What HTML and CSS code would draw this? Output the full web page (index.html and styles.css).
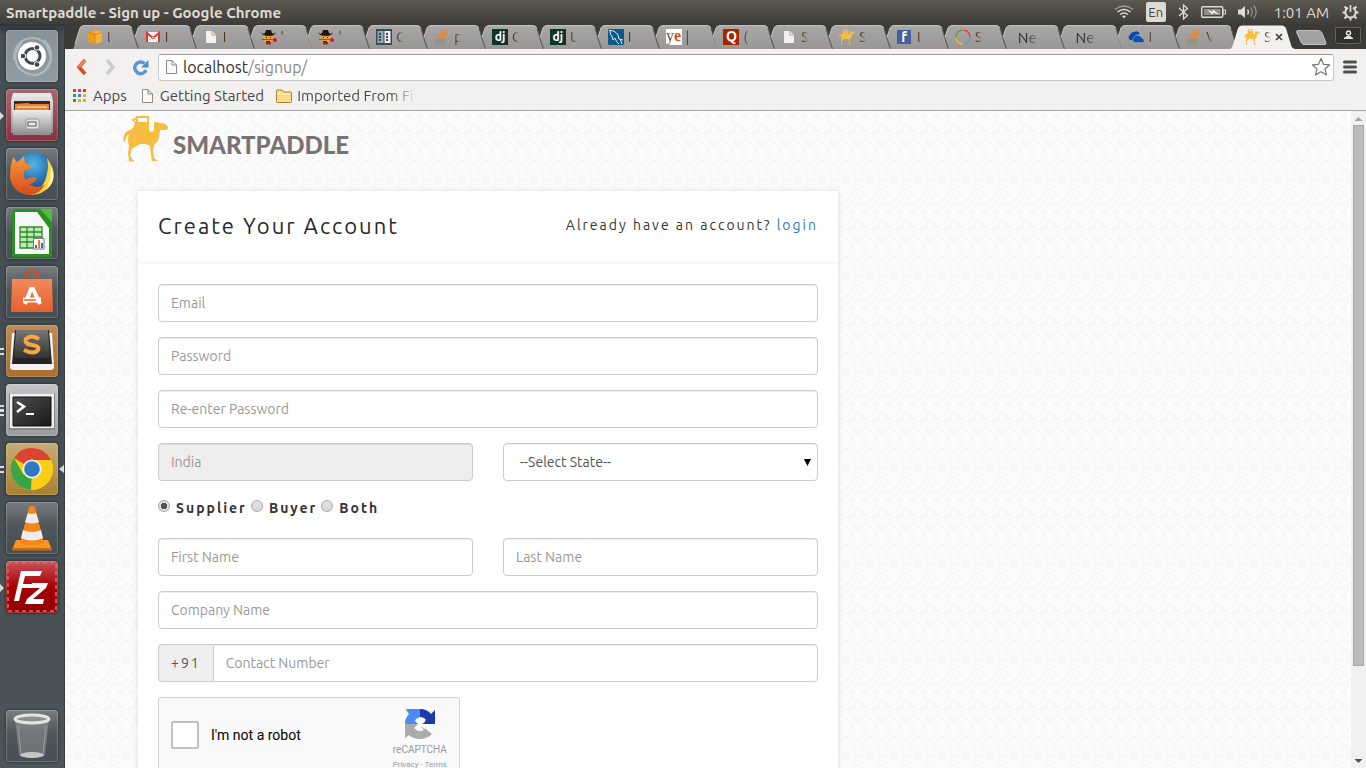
FILE: index.html
```html
<!DOCTYPE html>
<html lang="en">
<head>
<meta charset="utf-8">
<title>Smartpaddle - Sign up</title>
<link rel="stylesheet" href="styles.css">
</head>
<body>
<svg class="defs" aria-hidden="true">
  <defs>
    <linearGradient id="g-tab" x1="0" y1="0" x2="0" y2="1"><stop offset="0" stop-color="#a9a8a6"/><stop offset="1" stop-color="#989795"/></linearGradient>
    <linearGradient id="g-metal" x1="0" y1="0" x2="0" y2="1"><stop offset="0" stop-color="#ededed"/><stop offset="1" stop-color="#8d8d8d"/></linearGradient>
    <linearGradient id="g-bag" x1="0" y1="0" x2="0" y2="1"><stop offset="0" stop-color="#f08a5d"/><stop offset="1" stop-color="#e8602c"/></linearGradient>
    <linearGradient id="g-key" x1="0" y1="0" x2="0" y2="1"><stop offset="0" stop-color="#777"/><stop offset="1" stop-color="#333"/></linearGradient>
    <linearGradient id="g-term" x1="0" y1="0" x2="1" y2="1"><stop offset="0" stop-color="#505050"/><stop offset="1" stop-color="#181818"/></linearGradient>
    <radialGradient id="g-globe" cx=".5" cy=".3" r=".7"><stop offset="0" stop-color="#4fb8ea"/><stop offset="1" stop-color="#123a80"/></radialGradient>
    <linearGradient id="g-fox" x1="0" y1="0" x2="0" y2="1"><stop offset="0" stop-color="#f39a3a"/><stop offset="1" stop-color="#d84a1c"/></linearGradient>
  </defs>
  <symbol id="tab" viewBox="0 0 66 24" preserveAspectRatio="none">
    <path d="M4 12 L7 3 Q8 .5 11 .5 H55 Q58 .5 59 3 L64 20 Q65 23 66 24 H8 Z" fill="url(#g-tab)"/>
    <path d="M4 12 L7 3 Q8 .5 11 .5 H55 Q58 .5 59 3" fill="none" stroke="#c4c3c1"/>
    <path d="M59 3 L64 20 Q65 23 66 24" fill="none" stroke="#656461"/>
  </symbol>
  <symbol id="tab-first" viewBox="0 0 66 24" preserveAspectRatio="none">
    <path d="M0 24 Q1 22 2 19 L7 3 Q8 .5 11 .5 H55 Q58 .5 59 3 L64 20 Q65 23 66 24 Z" fill="url(#g-tab)"/>
    <path d="M2 19 L7 3 Q8 .5 11 .5 H55 Q58 .5 59 3" fill="none" stroke="#c4c3c1"/>
    <path d="M59 3 L64 20 Q65 23 66 24" fill="none" stroke="#656461"/>
  </symbol>
  <symbol id="tab-active" viewBox="0 0 68 24" preserveAspectRatio="none">
    <path d="M0 24 Q2 23 3 20 L8 4 Q9 .5 13 .5 H53 Q57 .5 58 4 L63 20 Q64 24 68 24 Z" fill="#f2f1f0"/>
  </symbol>
  <symbol id="camel" viewBox="0 0 45 46">
    <path d="M0 25 Q1 17 4 15 Q8 14 10 12 L12 6 H26 V14 Q29 18 31 14 V6 Q34 6 37 7 Q43 7 45 11 Q45 14 42 14 H37 L36 22 Q34 27 31 29 L30 35 L31 42 L35 45 H29 L28 39 L27 30 Q21 26 15 29 L9 33 L7 39 L9 43 L12 45.500 H6 L5 37 L6 30 Q4 24 6 18 Q3 19 2 26 Z" fill="#f6bd42"/>
    <path d="M14 7 V1 H25 V7 M14 2 L10 4 L13 6" fill="none" stroke="#f6bd42" stroke-width="2"/>
  </symbol>
  <symbol id="page" viewBox="0 0 16 16"><path d="M3 2 H9 L13 6 V14 H3 Z" fill="#f1f1f1"/><path d="M9 2 V6 H13" fill="none" stroke="#a4a4a4"/></symbol>
  <symbol id="page-line" viewBox="0 0 16 16"><path d="M3.500 1.500 H9 L13.500 6 V14.500 H3.500 Z M9 1.500 V6 H13.500" fill="#f8f8f8" stroke="#8a8a8a"/></symbol>
  <symbol id="aws" viewBox="0 0 16 16"><path d="M1 3 L8 1 V15 L1 13 Z" fill="#eb9e22"/><path d="M15 3 L8 1 V15 L15 13 Z" fill="#f8b436"/><path d="M1 3.500 L8 5.500 L15 3.500 M8 5 V15" stroke="#c27c17" stroke-width=".7" fill="none"/></symbol>
  <symbol id="gmail" viewBox="0 0 16 16"><path d="M1 3 H15 V13 H1 Z" fill="#f4f4f4"/><path d="M2 13 V4 L8 9 L14 4 V13" fill="none" stroke="#d73a30" stroke-width="2"/><path d="M4 12 L8 8 L12 12" fill="none" stroke="#c9c9c9"/></symbol>
  <symbol id="hat" viewBox="0 0 16 16"><circle cx="7.500" cy="9" r="4.800" fill="#e8a33c"/><path d="M0 3 Q2 6 4 4 L5 1 H10 L11 4 Q13 6 15 3 Q14 7 8 7 Q1 7 0 3Z" fill="#1b1712"/><path d="M5 13 H10 V15.500 H5Z" fill="#8d2e19"/><path d="M5 8.500 H6 M9 8.500 H10 M5 12.500 H9" stroke="#222"/><path d="M1 10.500 H13" stroke="#2f8b2d"/><circle cx="14" cy="11" r="2" fill="#e3122d"/></symbol>
  <symbol id="book" viewBox="0 0 16 16"><path d="M0 0 H16 V16 H0Z" fill="#3c4a52"/><path d="M1.500 2 H7.500 V14 H1.500Z" fill="#8fa9bb"/><path d="M8.500 2 H14.500 V14 H8.500Z" fill="#eef1f2"/><path d="M4 4 V12 M11 4 V12" stroke="#33424c" stroke-width="2" stroke-dasharray="2 1"/></symbol>
  <symbol id="so" viewBox="0 0 16 16"><path d="M1.500 10 V15 H10.500 V10 M3 11 H9 M3 13 H9" fill="none" stroke="#8b8680"/><path d="M3 8.500 L9 9.500 M4 6 L9.500 8.500 M6 3.500 L10.500 7.500 M8.500 1.500 L11.500 6.500 M12 0 L12.500 5.500" stroke="#f0862c" stroke-width="1.500"/></symbol>
  <symbol id="mysql" viewBox="0 0 16 16"><rect width="16" height="16" rx="1" fill="#0a5a88"/><path d="M1 1.500 Q7 1 10 6 L11 10 L15 11 M2 2 Q2 6 4 7 L5 11 L7 9 Q8 13 11 15 M12 10 L14 15" fill="none" stroke="#e3eef5"/></symbol>
  <symbol id="ring" viewBox="0 0 16 16"><g fill="none" stroke-width="1.500"><path d="M9 1 A7 7 0 0 1 15 8" stroke="#e33"/><path d="M15 9 A7 7 0 0 1 9 15" stroke="#5b9bd5"/><path d="M8 15 A7 7 0 0 1 1 9" stroke="#efb620"/><path d="M1 8 A7 7 0 0 1 8 1" stroke="#659a55"/></g></symbol>
  <symbol id="cloud" viewBox="0 0 16 16"><path d="M2 11 Q-1 8 2 6 Q3 3 6 3 Q10 1 12 5 L8 6 L5 11Z" fill="#0a48a6"/><path d="M6 13.500 Q3 11 6 8 Q8 5 12 7 Q13 8 14 9 Q17 10 16 13.500Z" fill="#0b51be" stroke="#a2a19f" stroke-width=".6"/></symbol>
</svg>

<header class="menubar">
  <div class="menubar-title">Smartpaddle - Sign up - Google Chrome</div>
  <div class="tray">
    <svg width="20" height="16" viewBox="0 0 20 16" fill="none" stroke="#dfdbd2" stroke-width="1.500"><path d="M1 5.500 Q10 -1.500 19 5.500" opacity=".55"/><path d="M3.500 8 Q10 3 16.500 8"/><path d="M6 10.500 Q10 7.500 14 10.500"/><path d="M8 12 L10 14.500 L12 12 Q10 11 8 12Z" fill="#dfdbd2" stroke="none"/></svg>
    <span class="lang">En</span>
    <svg width="11" height="16" viewBox="0 0 11 16" fill="none" stroke="#dfdbd2" stroke-width="1.300"><path d="M1 4 L9.500 11.500 L5.500 15 V1 L9.500 4.500 L1 12"/></svg>
    <svg width="25" height="14" viewBox="0 0 25 14"><rect x=".7" y="1.700" width="21" height="10.600" rx="1" fill="none" stroke="#dfdbd2" stroke-width="1.400"/><path d="M3 4 H19.500 V10 H3Z" fill="#918e87"/><path d="M22 5 H24.500 V9 H22Z" fill="none" stroke="#dfdbd2"/><path d="M6 4.500 L11.500 7 L12 4.500 L18 9.500 L12 7.500 L11.500 9.500Z" fill="#fff"/></svg>
    <svg width="21" height="16" viewBox="0 0 21 16" fill="none" stroke="#dfdbd2" stroke-width="1.300"><path d="M0 5.500 H3 L7 2 V14 L3 10.500 H0Z" fill="#dfdbd2" stroke="none"/><path d="M9.500 5.500 Q11.500 8 9.500 10.500"/><path d="M12.500 3.500 Q16 8 12.500 12.500" opacity=".5"/><path d="M15.500 1.500 Q21 8 15.500 14.500" opacity=".5"/></svg>
    <span class="clock">1:01 AM</span>
    <svg width="17" height="17" viewBox="0 0 17 17" fill="none" stroke="#dfdbd2"><path d="M6 3.700 A5.200 5.200 0 1 0 11 3.700" stroke-width="2"/><path d="M8.500 1 V8" stroke-width="1.700"/><path d="M.5 8.500 H3 M14 8.500 H16.500 M8.500 14 V16.500 M2.500 2.500 L4.500 4.500 M14.500 2.500 L12.500 4.500 M2.500 14.500 L4.500 12.500 M14.500 14.500 L12.500 12.500" stroke-width="2"/></svg>
  </div>
</header>

<div class="desktop">
<nav class="dock" aria-label="Launcher">
  <button class="app app-dash" aria-label="Dash"><svg viewBox="0 0 52 52"><path d="M8 30 Q8 8 28 8 Q42 10 44 26 M14 40 Q4 26 16 12 M44 22 Q48 40 30 45 Q18 45 12 36 M38 10 Q52 24 38 42" fill="none" stroke="#c7d0d5" stroke-width="2" opacity=".6"/><circle cx="26" cy="26" r="14" fill="#fff"/><circle cx="26.500" cy="26" r="7.500" fill="none" stroke="#3f474b" stroke-width="3"/><g fill="#3f474b" stroke="#fff"><circle cx="17" cy="26" r="2.800"/><circle cx="31" cy="17.500" r="2.800"/><circle cx="31" cy="34.500" r="2.800"/></g></svg></button>
  <button class="app app-files" aria-label="Files"><i class="run run-one"></i><svg viewBox="0 0 52 52"><path d="M7 4 H45 L47 12 V44 H5 V12Z" fill="url(#g-metal)"/><path d="M8 12 H44 V22 H8Z" fill="#3a2a24"/><path d="M9 15 L22 14 L24 15 H43 V22 H9Z" fill="#e98137"/><path d="M11 18 H41" stroke="#fff0d0"/><path d="M7 21 H45 V46 H7Z" fill="url(#g-metal)"/><rect x="20" y="30" width="13" height="10" rx="2" fill="#e3e3e3" stroke="#999"/><rect x="22" y="33" width="8" height="4" fill="#eee" stroke="#555"/></svg></button>
  <button class="app" aria-label="Firefox"><svg viewBox="0 0 52 52"><circle cx="27" cy="25" r="21" fill="url(#g-globe)"/><path d="M41 10 Q53 26 43 39 Q34 49 20 46 Q39 42 41 25 Q43 20 41 10Z" fill="#fbd33a"/><path d="M45 18 Q52 32 40 42 Q45 32 45 18Z" fill="#fff4a6"/><path d="M7 9 L11 14 Q15 11 18 8 L19 15 Q25 16 25 19 Q22 23 18 23 Q17 29 20 32 Q25 28 31 30 Q28 36 23 36 Q31 42 39 36 Q34 47 23 47 Q7 45 4 30 Q4 17 7 9Z" fill="url(#g-fox)"/></svg></button>
  <button class="app" aria-label="LibreOffice Calc"><svg viewBox="0 0 52 52"><path d="M8 2 H34 L46 14 V50 H6 V4Z" fill="#2a9021"/><path d="M9 5 H31 L43 21 V47 H9Z" fill="#f7f7f7"/><path d="M34 2 H46 V15Z" fill="#55bb3c"/><path d="M14 20 H36 V41 H14Z" fill="#bdeab5"/><path d="M14 20 H36 V41 H14Z M14 25 H36 M14 30 H36 M14 35 H36 M21 20 V41 M28 20 V41" stroke="#2f8a28" stroke-width="1.300" fill="none"/><path d="M27.500 31.500 H38 V42 H27.500Z" fill="#fff" stroke="#707880"/><path d="M29 38 H31 V41 H29Z M35 36 H37 V41 H35Z" fill="#2b75c9"/><path d="M32 33 H34 V41 H32Z" fill="#eb7b25"/></svg></button>
  <button class="app" aria-label="Software Center"><svg viewBox="0 0 52 52"><path d="M20 17 V9 Q20 5 26 5 Q32 5 32 9 V17" fill="none" stroke="#b75434" stroke-width="3"/><path d="M6 13 H46 L47 46 H5Z" fill="url(#g-bag)"/><path d="M19 38 L25 23 H27 L34 38" fill="none" stroke="#fff" stroke-width="4"/><path d="M17 34 H35" stroke="#fff" stroke-width="5"/><path d="M18 34 H30" stroke="#e8602c" stroke-width="1.500"/></svg></button>
  <button class="app app-sublime" aria-label="Sublime Text"><i class="run run-two"></i><svg viewBox="0 0 52 52"><path d="M6 8 H46 L48 42 Q48 45 44 45 H8 Q4 45 4 42Z" fill="#f2f2f2"/><path d="M9 5 H43 L46 39 H6Z" fill="#242424"/><path d="M10 5 H42 L44 33 H8Z" fill="url(#g-key)"/><path d="M33 14 Q25 9 20 14 Q18 19 26 20 Q34 21 32 25 Q28 30 18 25" fill="none" stroke="#f8a83c" stroke-width="4"/></svg></button>
  <button class="app app-term" aria-label="Terminal"><i class="run run-three"></i><svg viewBox="0 0 52 52"><path d="M3 10 H49 V46 H3Z" fill="#888"/><path d="M4 10 H48 V44 H4Z" fill="#f1f1f1"/><path d="M7 13 H45 V42 H7Z" fill="url(#g-term)" stroke="#111"/><path d="M11 18 L18 22.500 L11 28" fill="none" stroke="#fff" stroke-width="2.500"/><path d="M20 30 H28" stroke="#fff" stroke-width="2"/></svg></button>
  <button class="app app-chrome" aria-label="Google Chrome"><i class="run run-two"></i><i class="focus"></i><svg viewBox="0 0 52 52"><circle cx="26" cy="26" r="21" fill="#f9cf16"/><path d="M26 26 L8 15 A21 21 0 0 1 45 17 Z" fill="#dc4536"/><path d="M26 26 L25 47 A21 21 0 0 1 8 15 L17 31 L33 32Z" fill="#3aa547"/><path d="M26 17 H45 Q51 31 38 43 Q31 47 25 47 L34 31Z" fill="#f9cf16"/><circle cx="26" cy="26" r="9.500" fill="#f2f2f2"/><circle cx="26" cy="26" r="7.800" fill="#2f79c2"/></svg></button>
  <button class="app" aria-label="VLC"><svg viewBox="0 0 52 52"><path d="M10 38 H42 L46 48 H6Z" fill="#f79420"/><path d="M6 46 H46 V48.500 H6Z" fill="#c96a0a"/><path d="M23 5 Q26 2 29 5 L38 41 Q26 46 14 41Z" fill="#f6861a"/><path d="M22 11 Q26 13 30 11 L33 20 Q26 23 19 20Z M17 28 Q26 32 35 28 L37 36 Q26 41 15 36Z" fill="#ececec"/></svg></button>
  <button class="app app-fz" aria-label="FileZilla"><i class="run run-one"></i><svg viewBox="0 0 52 52"><rect x="2" y="2" width="48" height="48" fill="none" stroke="#d96767" stroke-width="2" stroke-dasharray="4 3" opacity=".8"/><path d="M15 10 H36 L34 15 H19 L17 23 H29 L28 27 H16 L13 40 H8Z M26 22 H42 L40 27 L27 38 H38 L37 43 H19 L21 38 L34 27 H25Z" fill="#fff"/></svg></button>
  <button class="app app-trash" aria-label="Trash"><svg viewBox="0 0 52 52"><path d="M9 10 L13 45 Q26 50 39 45 L43 10Z" fill="#c8caca" opacity=".28"/><path d="M12 16 L15 44 M40 16 L37 44" stroke="#d4d6d6" opacity=".4"/><ellipse cx="26" cy="45" rx="12" ry="3" fill="#c4c6c5"/><ellipse cx="26" cy="9" rx="17" ry="4" fill="#8c8f8d" stroke="#e3e5e1" stroke-width="3"/></svg></button>
</nav>

<div class="browser">
  <div class="strip">
    <div class="tabs" role="tablist">
      <button class="tab" role="tab"><svg class="shape"><use href="#tab-first"/></svg><svg class="fav"><use href="#aws"/></svg><span class="name">I</span></button>
      <button class="tab" role="tab"><svg class="shape"><use href="#tab"/></svg><svg class="fav"><use href="#gmail"/></svg><span class="name">I</span></button>
      <button class="tab" role="tab"><svg class="shape"><use href="#tab"/></svg><svg class="fav"><use href="#page"/></svg><span class="name">I</span></button>
      <button class="tab" role="tab"><svg class="shape"><use href="#tab"/></svg><svg class="fav"><use href="#hat"/></svg><span class="name">'</span></button>
      <button class="tab" role="tab"><svg class="shape"><use href="#tab"/></svg><svg class="fav"><use href="#hat"/></svg><span class="name">'</span></button>
      <button class="tab" role="tab"><svg class="shape"><use href="#tab"/></svg><svg class="fav"><use href="#book"/></svg><span class="name">C</span></button>
      <button class="tab" role="tab"><svg class="shape"><use href="#tab"/></svg><svg class="fav"><use href="#so"/></svg><span class="name">p</span></button>
      <button class="tab" role="tab"><svg class="shape"><use href="#tab"/></svg><span class="fav mark mark-dj">dj</span><span class="name">C</span></button>
      <button class="tab" role="tab"><svg class="shape"><use href="#tab"/></svg><span class="fav mark mark-dj">dj</span><span class="name">U</span></button>
      <button class="tab" role="tab"><svg class="shape"><use href="#tab"/></svg><svg class="fav"><use href="#mysql"/></svg><span class="name">I</span></button>
      <button class="tab" role="tab"><svg class="shape"><use href="#tab"/></svg><span class="fav mark mark-ye">y<b>e</b></span><span class="name">|</span></button>
      <button class="tab" role="tab"><svg class="shape"><use href="#tab"/></svg><span class="fav mark mark-q">Q</span><span class="name">(</span></button>
      <button class="tab" role="tab"><svg class="shape"><use href="#tab"/></svg><svg class="fav"><use href="#page"/></svg><span class="name">S</span></button>
      <button class="tab" role="tab"><svg class="shape"><use href="#tab"/></svg><svg class="fav"><use href="#camel"/></svg><span class="name">S</span></button>
      <button class="tab" role="tab"><svg class="shape"><use href="#tab"/></svg><span class="fav mark mark-f">f</span><span class="name">I</span></button>
      <button class="tab" role="tab"><svg class="shape"><use href="#tab"/></svg><svg class="fav"><use href="#ring"/></svg><span class="name">S</span></button>
      <button class="tab" role="tab"><svg class="shape"><use href="#tab"/></svg><span class="name name-wide">Ne</span></button>
      <button class="tab" role="tab"><svg class="shape"><use href="#tab"/></svg><span class="name name-wide">Ne</span></button>
      <button class="tab" role="tab"><svg class="shape"><use href="#tab"/></svg><svg class="fav"><use href="#cloud"/></svg><span class="name">I</span></button>
      <button class="tab" role="tab"><svg class="shape"><use href="#tab"/></svg><svg class="fav"><use href="#so"/></svg><span class="name">V</span></button>
      <button class="tab tab-current" role="tab" aria-selected="true"><svg class="shape"><use href="#tab-active"/></svg><svg class="fav"><use href="#camel"/></svg><span class="name">S</span><svg class="close" width="8" height="8" viewBox="0 0 8 8"><path d="M1 1 L7 7 M7 1 L1 7" stroke="#444" stroke-width="1.700"/></svg></button>
    </div>
    <div class="strip-end">
      <button class="newtab" aria-label="New tab"><svg width="31" height="15" viewBox="0 0 31 15"><path d="M2 .5 H22 Q25 .5 26 3 L30 13 Q30.500 14.500 28 14.500 H8 Q6 14.500 5 12 L.5 2 Q.5 .5 2 .5Z" fill="#a2a19f" stroke="#c4c3c1"/></svg></button>
      <button class="user" aria-label="User"><svg width="11" height="10" viewBox="0 0 11 10"><circle cx="5.500" cy="3" r="2" fill="none" stroke="#e5e3df" stroke-width="1.500"/><path d="M1 9 V8 Q5.500 3.500 10 8 V9Z" fill="#e5e3df"/></svg></button>
    </div>
  </div>

  <div class="toolbar">
    <button class="tool" aria-label="Back"><svg width="12" height="18" viewBox="0 0 12 18"><path d="M9 2 L3 9 L9 16" fill="none" stroke="#d9481c" stroke-width="3.500"/><path d="M9 2 L3 9" stroke="#f0905c" stroke-width="2"/></svg></button>
    <button class="tool" aria-label="Forward"><svg width="12" height="18" viewBox="0 0 12 18"><path d="M3 2 L9 9 L3 16" fill="none" stroke="#cfcdca" stroke-width="3.500"/></svg></button>
    <button class="tool" aria-label="Reload"><svg width="17" height="17" viewBox="0 0 17 17"><path d="M14 11 A5.800 5.800 0 1 1 12.500 4.500" fill="none" stroke="#5b97d5" stroke-width="3.500"/><path d="M16.500 1 V8.500 H9Z" fill="#4f8ed0"/></svg></button>
    <div class="omnibox">
      <svg width="16" height="16"><use href="#page-line"/></svg>
      <div class="url" role="textbox" aria-label="Address">localhost<span>/signup/</span></div>
      <svg width="20" height="20" viewBox="0 0 20 20"><path d="M10 1.500 L12.500 7.300 L18.700 7.800 L14 12 L15.500 18 L10 14.800 L4.500 18 L6 12 L1.300 7.800 L7.500 7.300Z" fill="#fff" stroke="#777" stroke-width="1.200" stroke-linejoin="round"/></svg>
    </div>
    <button class="tool tool-menu" aria-label="Menu"><svg width="14" height="14" viewBox="0 0 14 14"><path d="M1.500 2 H12.500 M1.500 7 H12.500 M1.500 12 H12.500" stroke="#4d5052" stroke-width="3" stroke-linecap="round"/></svg></button>
  </div>

  <nav class="bookmarks">
    <a href="#apps"><svg width="15" height="13" viewBox="0 0 15 13"><path d="M0 0h3v3h-3z M5 0h3v3h-3z M10 0h3v3h-3z" fill="#e8392d"/><path d="M0 5h3v3h-3z M0 10h3v3h-3z" fill="#2d9b52"/><path d="M5 5h3v3h-3z" fill="#3c82f0"/><path d="M10 5h3v3h-3z M5 10h3v3h-3z M10 10h3v3h-3z" fill="#f0ae12"/></svg>Apps</a>
    <a href="#start"><svg width="16" height="16"><use href="#page-line"/></svg>Getting Started</a>
    <a href="#imported"><svg width="16" height="14" viewBox="0 0 16 14"><path d="M.5 2 Q.5 1 1.500 1 H6 L7.500 3 H14.500 Q15.500 3 15.500 4 V12.500 Q15.500 13.500 14.500 13.500 H1.500 Q.5 13.500 .5 12.500Z" fill="#f9dc94" stroke="#ab7f2c"/><path d="M1 5 H15" stroke="#fff1c9"/></svg><span class="fade">Imported From Fi</span></a>
  </nav>

  <div class="view">
    <main class="page">
      <div class="container">
        <a class="brand" href="#home"><svg width="45" height="46"><use href="#camel"/></svg><span>SMARTPADDLE</span></a>
        <form class="card">
          <div class="card-head">
            <h1>Create Your Account</h1>
            <p>Already have an account? <a href="#login">login</a></p>
          </div>
          <div class="card-body">
            <input class="field" type="email" placeholder="Email" aria-label="Email">
            <input class="field" type="password" placeholder="Password" aria-label="Password">
            <input class="field" type="password" placeholder="Re-enter Password" aria-label="Re-enter Password">
            <div class="pair">
              <input class="field" type="text" placeholder="India" aria-label="Country" disabled>
              <select class="field" aria-label="State"><option>--Select State--</option></select>
            </div>
            <div class="kinds">
              <label><input type="radio" name="kind" checked>Supplier</label>
              <label><input type="radio" name="kind">Buyer</label>
              <label><input type="radio" name="kind">Both</label>
            </div>
            <div class="pair">
              <input class="field" type="text" placeholder="First Name" aria-label="First Name">
              <input class="field" type="text" placeholder="Last Name" aria-label="Last Name">
            </div>
            <input class="field" type="text" placeholder="Company Name" aria-label="Company Name">
            <div class="group">
              <span class="addon">+91</span>
              <input class="field" type="tel" placeholder="Contact Number" aria-label="Contact Number">
            </div>
            <div class="captcha">
              <label><input type="checkbox">I'm not a robot</label>
              <div class="captcha-brand">
                <svg width="32" height="32" viewBox="0 0 32 32"><path d="M16 1 V9 Q12 10 11 13 L14 16 H1 Q1 10 5 6 L1.500 1Z" fill="#4a8af4"/><path d="M16 1 Q23 1 27 6 L31 2 V16 H18 L22 12 Q20 9 16 9Z" fill="#1c3aa9"/><path d="M1 16 H14 L10 20 Q14 25 20 22 L17 18 H18 L28 26 Q23 31 16 31 Q9 31 5 27 L1 30Z" fill="#ababab"/><path d="M12 12 L15 15 L19 11 L21 14 L18 16 H22 L21 21 L17 18 L14 23 L11 20 L14 16Z" fill="#f9f9f9"/></svg>
                <span>reCAPTCHA</span>
                <small><a href="#privacy">Privacy</a> - <a href="#terms">Terms</a></small>
              </div>
            </div>
          </div>
        </form>
      </div>
    </main>
    <div class="scrollbar" aria-hidden="true">
      <svg width="15" height="14" viewBox="0 0 15 14"><path d="M3.500 10 L7.500 6 L11.500 10Z" fill="#a3a3a3"/></svg>
      <div class="track"><div class="thumb"></div></div>
      <svg width="15" height="14" viewBox="0 0 15 14"><path d="M3.500 5 L7.500 9 L11.500 5Z" fill="#505050"/></svg>
    </div>
  </div>
</div>
</div>
</body>
</html>
```

FILE: styles.css
```css
* { box-sizing: border-box; }

body {
  margin: 0;
  height: 100vh;
  display: flex;
  flex-direction: column;
  overflow: hidden;
  font-family: Ubuntu, "Noto Sans", sans-serif;
  font-size: 14px;
  color: #333;
}

button {
  border: 0;
  padding: 0;
  background: none;
  font: inherit;
  color: inherit;
}

svg { display: block; flex: none; }
.defs { position: absolute; width: 0; height: 0; }

/* Top panel */
.menubar {
  height: 24px;
  flex: none;
  display: flex;
  align-items: center;
  justify-content: space-between;
  padding: 0 7px 0 6px;
  background: linear-gradient(#5c594f, #3d3c38);
  color: #dfdbd2;
}
.menubar-title { font-size: 15px; font-weight: 700; }
.tray { display: flex; align-items: center; gap: 12px; }
.lang {
  width: 20px;
  height: 20px;
  border-radius: 2px;
  background: #dfdbd2;
  color: #45433e;
  font-size: 13px;
  line-height: 20px;
  text-align: center;
}
.clock { margin: 0 1px 0 3px; font-size: 15px; }

.desktop { flex: 1; min-height: 0; display: flex; }

/* Launcher */
.dock {
  width: 65px;
  flex: none;
  display: flex;
  flex-direction: column;
  gap: 7px;
  padding: 6px 0 6px 6px;
  border-right: 1px solid #343c40;
  background: linear-gradient(#30373a, #465054 12px, #434d52 50%, #4a5459);
}
.app {
  position: relative;
  width: 52px;
  height: 52px;
  flex: none;
  border-radius: 4px;
  background: linear-gradient(#777c7f, #50575b 45%, #474e53);
  box-shadow: inset 0 0 0 1px rgba(255, 255, 255, .2), 0 0 3px rgba(0, 0, 0, .6);
}
.app-dash { background: linear-gradient(#879298, #8f9ca4); }
.app-files { background: linear-gradient(#a56870, #8c2f3f); }
.app-sublime { background: linear-gradient(#bd8c56, #a76f31); }
.app-term { background: linear-gradient(#c4c4c8, #9b9ba0); }
.app-chrome { background: linear-gradient(#c8ac75, #a98030); }
.app-fz { background: linear-gradient(#c95356, #a80004 50%, #8f0003); }
.app-trash { margin-top: auto; }

.run {
  position: absolute;
  left: -6px;
  top: 23px;
  width: 4px;
}
.run-one {
  height: 8px;
  background: #dcdcdc;
  clip-path: polygon(0 0, 100% 50%, 0 100%);
}
.run-two, .run-three {
  height: 7px;
  border: solid #dcdcdc;
  border-width: 2px 0;
}
.run-three {
  top: 21px;
  height: 11px;
  background: linear-gradient(transparent 2px, #dcdcdc 2px, #dcdcdc 5px, transparent 5px);
}
.focus {
  position: absolute;
  right: -6px;
  top: 22px;
  width: 5px;
  height: 8px;
  background: #dcdcdc;
  clip-path: polygon(100% 0, 0 50%, 100% 100%);
}

/* Browser tabs */
.browser {
  flex: 1;
  min-width: 0;
  display: flex;
  flex-direction: column;
}
.strip {
  flex: none;
  height: 25px;
  display: flex;
  align-items: flex-end;
  padding-left: 8px;
  background: #3c3b37;
}
.tabs { flex: 1; min-width: 0; display: flex; }
.tab {
  position: relative;
  flex: 1 1 0;
  min-width: 0;
  height: 24px;
  display: flex;
  align-items: center;
  gap: 4px;
  padding-left: 14px;
}
.shape {
  position: absolute;
  left: 0;
  top: 0;
  width: calc(100% + 8px);
  height: 100%;
}
.fav { position: relative; width: 16px; height: 16px; flex: none; }
.name {
  position: relative;
  width: 10px;
  white-space: nowrap;
  text-align: left;
  background: linear-gradient(90deg, #4a3b28 2px, transparent 7px);
  background-clip: text;
  color: transparent;
}
.name-wide {
  width: 22px;
  margin-left: 5px;
  font-size: 15px;
  background-image: linear-gradient(90deg, #33312d 9px, transparent 23px);
}
.close { position: relative; margin-left: -3px; }
.mark {
  font-size: 12px;
  font-weight: 700;
  line-height: 15px;
  text-align: center;
  color: #fff;
}
.mark-dj { background: #0f3327; }
.mark-ye { background: #fff; color: #555; font-family: "Liberation Serif", serif; font-size: 16px; font-weight: 400; line-height: 13px; }
.mark-ye b { color: #e8461b; }
.mark-q { background: #a82400; font-size: 14px; }
.mark-f { width: 14px; height: 14px; margin-right: 2px; background: #4460a3; font-size: 14px; }

.strip-end {
  width: 78px;
  flex: none;
  display: flex;
  align-items: center;
  justify-content: space-between;
  padding: 0 5px 0 8px;
  height: 24px;
}
.user {
  width: 26px;
  height: 17px;
  display: grid;
  place-items: center;
  margin-bottom: 4px;
  border: 1px solid #62605b;
  border-radius: 0 0 3px 3px;
  background: #302f2c;
}

/* Toolbar */
.toolbar {
  flex: none;
  height: 36px;
  display: flex;
  align-items: center;
  gap: 16px;
  padding: 0 9px 0 11px;
  background: #f2f1f0;
}
.omnibox {
  flex: 1;
  height: 27px;
  display: flex;
  align-items: center;
  gap: 4px;
  padding: 0 2px 0 4px;
  margin: 0 -7px;
  border: 1px solid #c9c7c4;
  border-top-color: #98979a;
  border-radius: 3px;
  background: #fff;
}
.url { flex: 1; font-size: 16px; color: #2f2f2f; }
.url span { color: #888; }

.bookmarks {
  flex: none;
  height: 26px;
  display: flex;
  align-items: center;
  gap: 12px;
  padding: 0 8px 4px;
  border-bottom: 1px solid #a5a4a2;
  background: #f2f1f0;
  font-size: 15px;
}
.bookmarks a {
  display: flex;
  align-items: center;
  gap: 5px;
  color: #45464a;
  text-decoration: none;
}
.fade {
  background: linear-gradient(90deg, #45464a 80%, #e0e0e6);
  background-clip: text;
  color: transparent;
}

/* Page */
.view { flex: 1; min-height: 0; display: flex; }
.page {
  flex: 1;
  overflow: hidden;
  background: #f7f7f7 url("data:image/svg+xml,%3Csvg xmlns='http://www.w3.org/2000/svg' xmlns:xlink='http://www.w3.org/1999/xlink' width='96' height='96'%3E%3Cdefs%3E%3Cpath id='p' d='M-96 0l96 96M-72 0l96 96M-48 0l96 96M-24 0l96 96M0 0l96 96M24 0l96 96M48 0l96 96M72 0l96 96M-120 0l96 96'/%3E%3Cg id='g' fill='none' stroke='%23fff' stroke-width='1.200'%3E%3Cuse xlink:href='%23p' x='0' stroke-dasharray='7 5 14 8 3 6 19 4'/%3E%3Cuse xlink:href='%23p' x='4' stroke-dasharray='3 9 11 4 8 12'/%3E%3Cuse xlink:href='%23p' x='8' stroke-dasharray='17 6 5 10 9 3'/%3E%3Cuse xlink:href='%23p' x='12' stroke-dasharray='5 4 8 15 13 7'/%3E%3Cuse xlink:href='%23p' x='16' stroke-dasharray='2 7 21 5 6 11'/%3E%3Cuse xlink:href='%23p' x='20' stroke-dasharray='12 9 4 6 10 8'/%3E%3C/g%3E%3C/defs%3E%3Cuse xlink:href='%23g'/%3E%3Cuse xlink:href='%23g' transform='matrix(-1 0 0 1 98 0)'/%3E%3C/svg%3E");
}
.container { max-width: 1170px; margin: 0 auto; }
.brand {
  display: flex;
  align-items: center;
  gap: 5px;
  padding: 5px 0 29px;
  color: #777372;
  font-family: Lato, sans-serif;
  font-size: 24px;
  font-weight: 900;
  line-height: 30px;
  text-decoration: none;
}
.brand span { padding-top: 12px; }

.card {
  max-width: 700px;
  margin-left: 15px;
  background: #fff;
  box-shadow: 0 0 6px rgba(0, 0, 0, .12);
  letter-spacing: 2px;
}
.card-head {
  display: flex;
  justify-content: space-between;
  align-items: flex-start;
  padding: 20px 20px 21px;
  border-bottom: 3px solid #f9f9f9;
}
.card-head h1 {
  margin: 0;
  font-size: 22px;
  font-weight: 400;
  line-height: 29px;
  color: #26282b;
}
.card-head p { margin: 0; line-height: 28px; }
.card-head a { color: #337ab7; text-decoration: none; }

.card-body {
  display: flex;
  flex-direction: column;
  gap: 15px;
  padding: 20px;
}
.field {
  width: 100%;
  height: 38px;
  padding: 6px 12px;
  border: 1px solid #ccc;
  border-radius: 4px;
  background: #fff;
  box-shadow: inset 0 1px 1px rgba(0, 0, 0, .075);
  font-family: inherit;
  font-size: 14px;
  letter-spacing: 0;
  color: #555;
}
.field::placeholder { color: #999; }
.field:disabled { background: #eee; }
select.field {
  appearance: none;
  padding-left: 16px;
  background: #fff url("data:image/svg+xml,%3Csvg xmlns='http://www.w3.org/2000/svg' width='7' height='7'%3E%3Cpath d='M0 0h7l-3.500 7z'/%3E%3C/svg%3E") no-repeat right 6px center;
}
.pair {
  display: grid;
  grid-template-columns: 1fr 1fr;
  gap: 30px;
}
.kinds {
  display: flex;
  gap: 4px;
  height: 27px;
  line-height: 24px;
  font-weight: 700;
}
.kinds label { display: flex; align-items: flex-start; gap: 6px; }
.kinds input {
  appearance: none;
  width: 12px;
  height: 12px;
  margin: 4px 0 0;
  border: 1px solid #a8a8a8;
  border-radius: 50%;
  background: linear-gradient(#e4e4e4, #d8d8d8);
}
.kinds input:checked {
  background: radial-gradient(circle, #555 0 3px, #e0e0e0 3px);
}
.group { display: flex; }
.group .field { border-radius: 0 4px 4px 0; }
.addon {
  flex: none;
  padding: 0 12px;
  border: 1px solid #ccc;
  border-right: 0;
  border-radius: 4px 0 0 4px;
  background: #eee;
  line-height: 36px;
  color: #555;
}

.captcha {
  width: 302px;
  height: 76px;
  display: flex;
  justify-content: space-between;
  padding: 0 12px;
  border: 1px solid #d3d3d3;
  border-radius: 3px;
  background: #f9f9f9;
  font-family: Roboto, sans-serif;
  letter-spacing: 0;
  color: #000;
}
.captcha label { display: flex; align-items: center; gap: 12px; }
.captcha input {
  appearance: none;
  width: 28px;
  height: 28px;
  margin: 0;
  border: 2px solid #c1c1c1;
  border-radius: 2px;
  background: #fff;
}
.captcha-brand {
  display: flex;
  flex-direction: column;
  align-items: center;
  padding-top: 10px;
  color: #999;
  font-size: 10px;
  line-height: 20px;
}
.captcha-brand small { font-size: 8px; line-height: 10px; }
.captcha-brand a { color: inherit; text-decoration: none; }

/* Scrollbar */
.scrollbar {
  width: 15px;
  flex: none;
  display: flex;
  flex-direction: column;
  background: #f1f1f1;
}
.track { flex: 1; padding: 0 2px; }
.thumb {
  height: 86%;
  border: 1px solid #a8a8a8;
  background: #bcbcbc;
}
```
